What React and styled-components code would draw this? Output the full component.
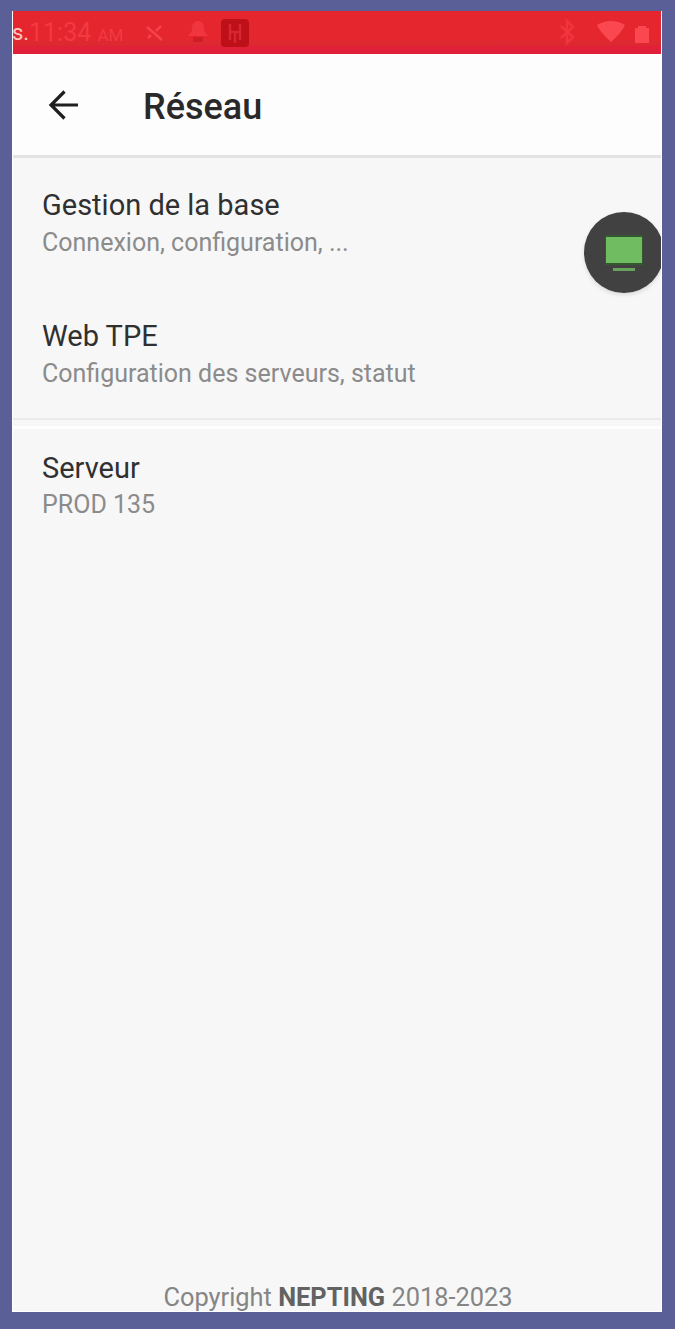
import React from "react";
import styled, { createGlobalStyle } from "styled-components";

const GlobalStyle = createGlobalStyle`
  * {
    box-sizing: border-box;
  }
  body {
    margin: 0;
    background: #5a6097;
    font-family: Roboto, "Liberation Sans", sans-serif;
  }
`;

const Frame = styled.div`
  height: 1329px;
  padding: 11px 13px 17px 12px;
  background: #5a6097;
`;

const Screen = styled.div`
  position: relative;
  display: flex;
  flex-direction: column;
  height: 1301px;
  overflow: hidden;
  background: #f7f7f7;
  border: solid #fff;
  border-width: 0 1px 1px 1px;
`;

const StatusBar = styled.div`
  display: flex;
  flex: none;
  align-items: center;
  justify-content: space-between;
  height: 43px;
  background: linear-gradient(#e5262f 65%, #da2b30 76%, #e21f38 84%, #df2038);
`;

const StatusText = styled.div`
  display: flex;
  align-items: center;
  height: 43px;
  font-size: 22px;
  color: #ffc9c0;
`;

const Carrier = styled.span`
  width: 17px;
  margin-left: -1px;
`;

const Clock = styled.span`
  width: 99px;
  font-size: 25px;
  white-space: nowrap;
  color: #f23a43;
  small {
    font-size: 17px;
  }
`;

const StatusSvg = styled.svg`
  flex: none;
  display: block;
`;

const Toolbar = styled.header`
  display: flex;
  flex: none;
  align-items: center;
  height: 104px;
  padding-left: 33px;
  background: #fdfdfd;
  border-bottom: 3px solid #e3e3e3;
`;

const BackButton = styled.button`
  display: flex;
  width: 36px;
  padding: 0;
  border: 0;
  background: none;
`;

const Title = styled.h1`
  margin: 5px 0 0 61px;
  font-size: 36px;
  font-weight: 500;
  line-height: 42px;
  color: #292929;
`;

const Section = styled.section`
  padding-top: 28px;
  & + & {
    margin-top: -30px;
    border-top: 2px solid #ebebeb;
    padding-top: 0;
  }
`;

const Separator = styled.div`
  height: 3px;
  margin: 6px 0 20px;
  background: #fefefe;
`;

const Item = styled.div`
  height: 131px;
  padding-left: 29px;
`;

const ItemTitle = styled.div`
  font-size: 29px;
  line-height: 38px;
  color: #303030;
`;

const ItemSummary = styled.div`
  padding-top: ${({ tight }) => (tight ? "0" : "1px")};
  font-size: 25px;
  line-height: 36px;
  color: #8b8b8b;
`;

const Footer = styled.footer`
  margin: auto 0 -1px;
  padding-left: 2px;
  text-align: center;
  font-size: 25.4px;
  line-height: 30px;
  color: #858585;
  b {
    font-weight: 700;
    color: #626262;
  }
`;

const FloatingButton = styled.div`
  position: absolute;
  top: 201px;
  right: -3px;
  display: flex;
  align-items: center;
  justify-content: center;
  width: 80px;
  height: 81px;
  border-radius: 50%;
  background: #414141;
  box-shadow: 0 2px 4px rgba(0, 0, 0, 0.12);
`;

const StatusIcons = () => (
  <StatusSvg width="126" height="43" viewBox="0 0 126 43">
    <path d="M19 16l15 13M33 15l-5 5M20 27l3-3" stroke="#f5434b" strokeWidth="2.5" fill="none" />
    <path d="M64 20v-4a6 6 0 0 1 12 0v4l4 5H60z" fill="#f0353e" />
    <path d="M65 26h10v5h-10z" fill="#cf1d25" />
    <rect x="93" y="8" width="28" height="28" rx="4" fill="#bd1018" />
    <path d="M102 13v16M112 13v16M102 21h10M107 21v11" stroke="#d8262f" strokeWidth="2.5" fill="none" />
  </StatusSvg>
);

const SystemIcons = () => (
  <StatusSvg width="106" height="43" viewBox="0 0 106 43">
    <path d="M6 15l12 11-6 6V10l6 6L6 27" stroke="#f0353e" strokeWidth="2.5" fill="none" />
    <path d="M42 14q14-8 28 0-3 7-14 17-11-10-14-17z" fill="#fb4850" />
    <path d="M80 17h3v-2h8v2h3v15H80z" fill="#fb4850" />
  </StatusSvg>
);

const items = [
  { title: "Gestion de la base", summary: "Connexion, configuration, ..." },
  { title: "Web TPE", summary: "Configuration des serveurs, statut" },
];

const App = () => {
  return (
    <Frame>
      <GlobalStyle />
      <Screen>
        <StatusBar>
          <StatusText>
            <Carrier>s.</Carrier>
            <Clock>
              11:34 <small>AM</small>
            </Clock>
            <StatusIcons />
          </StatusText>
          <SystemIcons />
        </StatusBar>
        <Toolbar>
          <BackButton aria-label="Retour">
            <svg width="36" height="36" viewBox="0 0 36 36">
              <path
                d="M32 18H6M18.5 4.5L5 18l13.5 13.5"
                stroke="#202020"
                strokeWidth="3.2"
                fill="none"
              />
            </svg>
          </BackButton>
          <Title>Réseau</Title>
        </Toolbar>
        <Section>
          {items.map((item) => (
            <Item key={item.title}>
              <ItemTitle>{item.title}</ItemTitle>
              <ItemSummary>{item.summary}</ItemSummary>
            </Item>
          ))}
        </Section>
        <Section>
          <Separator />
          <Item>
            <ItemTitle>Serveur</ItemTitle>
            <ItemSummary tight>PROD 135</ItemSummary>
          </Item>
        </Section>
        <Footer>
          Copyright <b>NEPTING</b> 2018-2023
        </Footer>
        <FloatingButton>
          <svg width="40" height="38" viewBox="0 0 40 38">
            <path d="M1 1h38v30H1z" fill="#35572f" />
            <path d="M2 3h36v26H2z" fill="#6fbd60" />
            <path d="M9 34h22v3H9z" fill="#68a35d" />
          </svg>
        </FloatingButton>
      </Screen>
    </Frame>
  );
};

export default App;
